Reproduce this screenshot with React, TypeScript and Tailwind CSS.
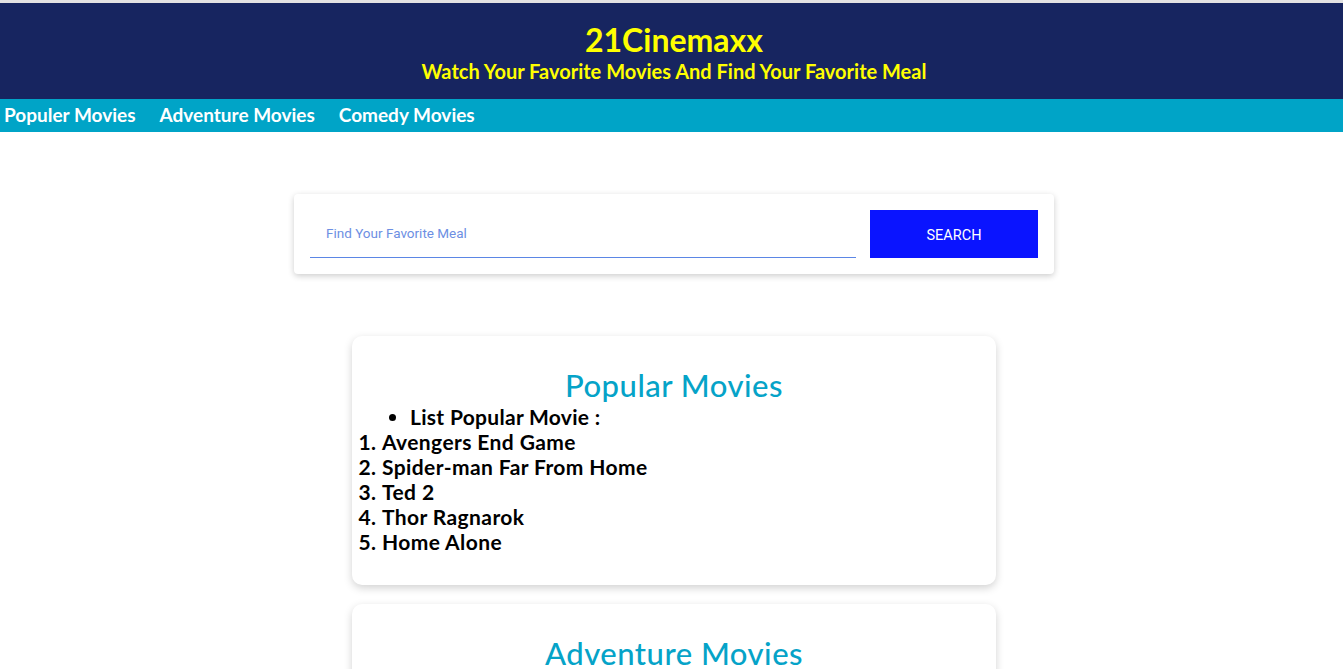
const font = { fontFamily: "Lato, 'Noto Sans', sans-serif" };

const popular = [
  "Avengers End Game",
  "Spider-man Far From Home",
  "Ted 2",
  "Thor Ragnarok",
  "Home Alone",
];

function MovieCard({ title, label, items }: { title: string; label: string; items: string[] }) {
  return (
    <section className="mx-auto w-[644px] rounded-[10px] bg-white pt-[30px] pb-[31px] shadow-[0_3px_8px_rgba(0,0,0,0.18)]">
      <h2 className="text-center text-[31px] font-medium leading-[38px] tracking-[0.5px] text-[#05a3c8]">{title}</h2>
      <ul className="list-disc pl-[58px] text-[21px] font-bold leading-[25px] tracking-[0.3px] text-black">
        <li>{label}</li>
      </ul>
      <ol className="list-decimal pl-[30px] text-[21px] font-bold leading-[25px] tracking-[0.4px] text-black">
        {items.map((m) => (
          <li key={m}>{m}</li>
        ))}
      </ol>
    </section>
  );
}

export default function App() {
  return (
    <div className="min-h-screen w-[1348px] bg-white" style={font}>
      <div className="h-[3px] bg-[#e2e2e2]" />
      <header className="flex h-[96px] flex-col items-center bg-[#172560] pt-[19px]">
        <h1 className="text-[32px] font-bold leading-[36px] text-[#ffff00]">21Cinemaxx</h1>
        <p className="mt-[1px] text-[20px] font-bold leading-[24px] text-[#ffff00]">
          Watch Your Favorite Movies And Find Your Favorite Meal
        </p>
      </header>
      <nav className="flex h-[33px] items-center gap-[24px] bg-[#00a4c7] pl-[4px] text-[19px] font-bold text-white">
        <a>Populer Movies</a>
        <a>Adventure Movies</a>
        <a>Comedy Movies</a>
      </nav>

      <div className="mx-auto mt-[62px] flex w-[760px] items-center gap-[14px] rounded-[4px] bg-white px-[16px] py-[16px] shadow-[0_2px_6px_rgba(0,0,0,0.2)]">
        <div className="flex h-[48px] flex-1 items-center border-b border-[#5b86e5] pl-[16px]">
          <span className="text-[13.5px] text-[#6d8fe3]" style={{ fontFamily: "Roboto, sans-serif" }}>
            Find Your Favorite Meal
          </span>
        </div>
        <button
          className="h-[48px] w-[168px] bg-[#0a14ff] pt-[3px] text-[14.5px] text-white"
          style={{ fontFamily: "Roboto, sans-serif" }}
        >
          SEARCH
        </button>
      </div>

      <div className="mt-[62px] flex flex-col gap-[19px] pb-[40px]">
        <MovieCard title="Popular Movies" label="List Popular Movie :" items={popular} />
        <MovieCard
          title="Adventure Movies"
          label="List Adventure Movie :"
          items={["Jumanji", "Indiana Jones", "Jurassic World", "The Lost City", "Uncharted"]}
        />
      </div>
    </div>
  );
}
